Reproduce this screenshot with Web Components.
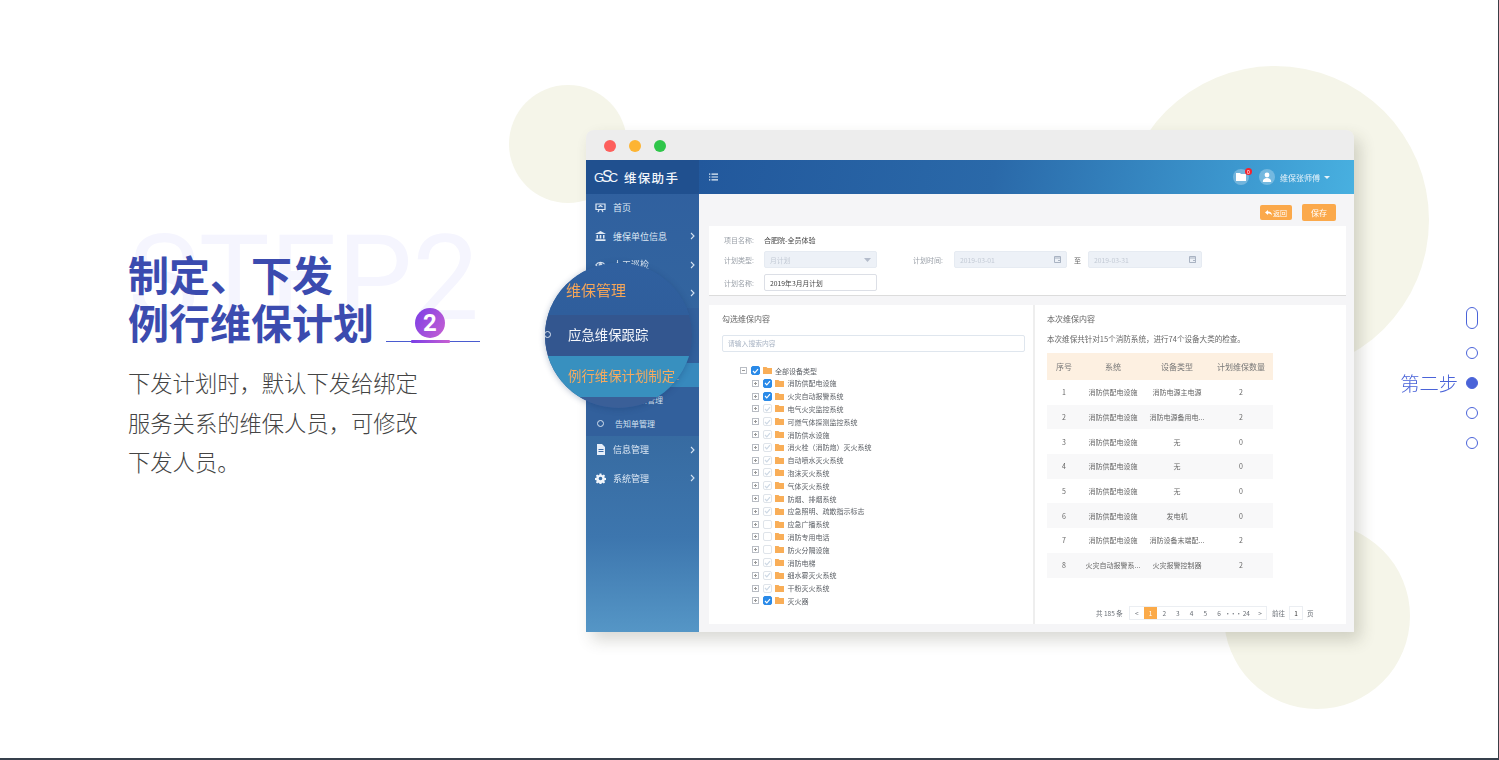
<!DOCTYPE html>
<html lang="zh">
<head>
<meta charset="utf-8">
<title>第二步</title>
<style>
  html, body { margin: 0; padding: 0; background: #fff; overflow: hidden; }
  body { font-family: "Noto Sans CJK SC", "Liberation Sans", sans-serif; }
</style>
</head>
<body>
<step-page></step-page>

<script>
const CJK = `"Noto Sans CJK SC", "Liberation Sans", sans-serif`;

// little helper, every element below is: template + open shadow root
function define(name, html, render) {
  const template = document.createElement("template");
  template.innerHTML = html;
  customElements.define(name, class extends HTMLElement {
    constructor() {
      super();
      this.attachShadow({ mode: "open" });
      this.shadowRoot.appendChild(template.content.cloneNode(true));
    }
    connectedCallback() {
      if (render && !this._done) { this._done = true; render.call(this, this.shadowRoot); }
    }
  });
}

const icons = {
  home: `<svg width="11" height="10" viewBox="0 0 11 10" fill="none" stroke="#dfe9f5" stroke-width="1.2"><path d="M1 1h9v5.5H1z"/><path d="M3 9l1.2-2.5M8 9L6.8 6.5M3.5 4l2-1.4L7.5 4"/></svg>`,
  bank: `<svg width="11" height="10" viewBox="0 0 11 10" fill="#dfe9f5"><path d="M5.5 0L11 3H0z"/><path d="M1.5 4h1.5v3.5H1.5zM4.7 4h1.6v3.5H4.7zM8 4h1.5v3.5H8zM.5 8.2h10V10H.5z"/></svg>`,
  eye: `<svg width="11" height="10" viewBox="0 0 11 10" fill="none" stroke="#dfe9f5" stroke-width="1.2"><path d="M.8 5C3 1.6 8 1.6 10.2 5 8 8.4 3 8.4.8 5z"/><circle cx="5.5" cy="5" r="1.3" fill="#dfe9f5"/></svg>`,
  wrench: `<svg width="11" height="10" viewBox="0 0 11 10" fill="#dfe9f5"><path d="M1 1h9v2H1zM1 4.5h9v2H1zM1 8h9v2H1z"/></svg>`,
  doc: `<svg width="11" height="11" viewBox="0 0 11 11"><path fill="#e6eef8" d="M2 0h5l3 3v8H2z"/><path stroke="#3a6ca8" d="M3.5 5.5h5M3.5 7.5h5"/></svg>`,
  gear: `<svg width="11" height="11" viewBox="0 0 24 24" fill="#f0f5fb"><path fill-rule="evenodd" d="M10 1h4l.6 3.1 2 .8 2.6-1.8 2.8 2.8-1.8 2.6.8 2 3 .5v4l-3 .6-.8 2 1.8 2.6-2.8 2.8-2.6-1.8-2 .8-.6 3h-4l-.6-3-2-.8-2.6 1.8-2.8-2.8 1.8-2.6-.8-2-3-.6v-4l3-.5.8-2L2 5.9l2.8-2.8 2.6 1.8 2-.8zM12 8a4 4 0 1 0 0 8 4 4 0 0 0 0-8z"/></svg>`,
  chevron: `<svg width="5" height="8" viewBox="0 0 5 8" fill="none" stroke="#d5e3f2" stroke-width="1.1"><path d="M1 1l3 3-3 3"/></svg>`
};

define("side-item", `
  <style>
    :host { display: flex; align-items: center; height: 28.5px; padding-left: 9px; padding-bottom: 1px; box-sizing: border-box; color: #dde8f4; font-size: 9px; position: relative; }
    #icon { width: 11px; height: 11px; display: flex; align-items: center; margin-right: 7px; }
    #arrow { margin-left: auto; margin-right: 4px; display: flex; }
  </style>
  <span id="icon"></span><slot></slot><span id="arrow"></span>
`, function (root) {
  root.querySelector("#icon").innerHTML = icons[this.getAttribute("icon")] || "";
  if (this.hasAttribute("more")) root.querySelector("#arrow").innerHTML = icons.chevron;
});

define("side-sub", `
  <style>
    :host { display: flex; align-items: center; height: 24px; padding-left: 11px; box-sizing: border-box; color: #d5e2f0; font-size: 8px; }
    :host([active]) { background: #3789bd; color: #f8b469; }
    i { width: 5px; height: 5px; border: 1px solid #d5e2f0; border-radius: 50%; margin-right: 11px; }
  </style>
  <i></i><slot></slot>
`);

define("app-sidebar", `
  <style>
    :host { display: block; width: 113px; flex: none; background: linear-gradient(180deg, #2f5f9f 0%, #36699f 55%, #3d76ae 80%, #5596c6 100%); font-family: ${CJK}; }
    #logo { height: 34px; display: flex; align-items: center; background: #20508f; color: #f2f6fb; padding-left: 8px; box-sizing: border-box; }
    #mark { font: 400 13px "Liberation Sans", sans-serif; letter-spacing: -3px; width: 30px; flex: none; }
    #mark b { font-size: 16px; font-weight: 400; font-style: italic; }
    #name { font-size: 12.5px; font-weight: 500; letter-spacing: 1.3px; }
    #subs { background: #32609c; padding-top: 7px; height: 128px; box-sizing: border-box; }
  </style>
  <div id="logo"><span id="mark">G<b>S</b>C</span><span id="name">维保助手</span></div>
  <side-item icon="home">首页</side-item>
  <side-item icon="bank" more>维保单位信息</side-item>
  <side-item icon="eye" more>人工巡检</side-item>
  <side-item icon="wrench" more>维保管理</side-item>
  <div id="subs">
    <side-sub>应急维保跟踪</side-sub>
    <side-sub>维保计划管理</side-sub>
    <side-sub active>例行维保计划制定</side-sub>
    <side-sub>维保记录管理</side-sub>
    <side-sub>告知单管理</side-sub>
  </div>
  <side-item icon="doc" more>信息管理</side-item>
  <side-item icon="gear" more>系统管理</side-item>
`);

define("app-header", `
  <style>
    :host { display: flex; align-items: center; height: 34px; background: linear-gradient(100deg, #22589c 0%, #2a69a9 45%, #3e9cd2 85%, #48b0e0 100%); color: #e6f2fa; font-family: ${CJK}; padding-left: 10px; box-sizing: border-box; }
    #list { display: flex; }
    #right { margin-left: auto; display: flex; align-items: center; padding-right: 24px; font-size: 8px; }
    .round { width: 16px; height: 16px; border-radius: 50%; background: rgba(255,255,255,.28); display: flex; align-items: center; justify-content: center; position: relative; }
    #dot { position: absolute; right: -3px; top: -1px; width: 7px; height: 7px; border-radius: 50%; background: #f5222d; color: #fff; font-size: 5px; line-height: 7px; text-align: center; }
    #who { margin: 0 4px 0 5px; }
    #caret { width: 0; height: 0; border: 3px solid transparent; border-top: 3.5px solid #e6f2fa; margin-top: 3px; }
  </style>
  <span id="list"><svg width="9" height="8" viewBox="0 0 9 8" fill="#e8f2fa"><path d="M0 .5h1.3v1.2H0zM2.5.5H9v1.2H2.5zM0 3.4h1.3v1.2H0zM2.5 3.4H9v1.2H2.5zM0 6.3h1.3v1.2H0zM2.5 6.3H9v1.2H2.5z"/></svg></span>
  <div id="right">
    <span class="round"><svg width="10" height="8" viewBox="0 0 10 8" fill="#fff"><path d="M0 0h4l1 1h5v7H0z"/></svg><span id="dot">0</span></span>
    <span class="round" style="margin-left:10px"><svg width="10" height="10" viewBox="0 0 10 10" fill="#fff"><circle cx="5" cy="3" r="2.4"/><path d="M.8 10c0-3 2-4 4.2-4s4.200 1 4.200 4z"/></svg></span>
    <span id="who">维保张师傅</span><span id="caret"></span>
  </div>
`);

define("form-field", `
  <style>
    :host { display: flex; align-items: center; box-sizing: border-box; width: 113px; height: 17px; border-radius: 2px; background: #edf1f7; border: 1px solid #e6ebf2; color: #c3cad5; font-size: 6.8px; padding: 0 5px; }
    :host([plain]) { background: #fff; border-color: #dcdfe6; color: #444; }
    #end { margin-left: auto; display: flex; }
  </style>
  <slot></slot><span id="end"></span>
`, function (root) {
  const kind = this.getAttribute("end");
  if (kind === "caret") root.querySelector("#end").innerHTML = `<svg width="7" height="4" viewBox="0 0 7 4" fill="#b4bccb"><path d="M0 0h7L3.500 4z"/></svg>`;
  if (kind === "date") root.querySelector("#end").innerHTML = `<svg width="7" height="7" viewBox="0 0 7 7" fill="none" stroke="#a9b3c2"><path d="M.5.5h6v6h-6zM.5 2h6M4 4.500h2.500V6.500"/></svg>`;
});

define("plan-form", `
  <style>
    :host { display: block; height: 70px; background: #fff; border-bottom: 1px solid #dcdcdc; box-sizing: border-box; padding: 7px 0 0 15px; font-size: 7px; color: #9aa0a8; font-family: ${CJK}; }
    .row { display: flex; align-items: center; }
    .label { width: 40px; flex: none; }
    .mid { width: 41px; margin-left: 36px; flex: none; }
    .to { width: 21px; text-align: center; color: #666; flex: none; }
    .val { color: #444; }
  </style>
  <div class="row" style="height:14px"><span class="label">项目名称:</span><span class="val">合肥院-全员体验</span></div>
  <div class="row" style="margin-top:4px">
    <span class="label">计划类型:</span><form-field end="caret">月计划</form-field>
    <span class="mid">计划时间:</span><form-field end="date">2019-03-01</form-field>
    <span class="to">至</span><form-field end="date" style="width:114px">2019-03-31</form-field>
  </div>
  <div class="row" style="margin-top:6px"><span class="label">计划名称:</span><form-field plain>2019年3月月计划</form-field></div>
`);

define("tree-row", `
  <style>
    :host { display: flex; align-items: center; height: 12.8px; font-size: 7px; color: #5c6066; white-space: nowrap; }
    :host([child]) { margin-left: 12.4px; }
    #exp { width: 7px; height: 7px; border: 1px solid #b9bdc4; box-sizing: border-box; position: relative; flex: none; margin-right: 4px; }
    #exp::before { content: ""; position: absolute; left: 1px; right: 1px; top: 2px; height: 1px; background: #999; }
    :host([child]) #exp::after { content: ""; position: absolute; top: 1px; bottom: 1px; left: 2px; width: 1px; background: #999; }
    #box { width: 9px; height: 9px; border-radius: 2px; box-sizing: border-box; flex: none; margin-right: 3px; border: 1px solid #dfe4ea; background: #fff; display: flex; align-items: center; justify-content: center; }
    :host([state=checked]) #box { background: #2a8ae8; border-color: #2a8ae8; }
    #box svg { display: none; }
    :host([state=checked]) #box svg, :host([state=ghost]) #box svg { display: block; }
    :host([state=ghost]) #box svg path { stroke: #cdd8e4; }
    #folder { flex: none; margin-right: 3px; display: flex; }
  </style>
  <span id="exp"></span>
  <span id="box"><svg width="7" height="6" viewBox="0 0 7 6" fill="none"><path d="M1 3l1.800 1.800L6 1.200" stroke="#fff" stroke-width="1.200"/></svg></span>
  <span id="folder"><svg width="9" height="7" viewBox="0 0 9 7" fill="#f9ae58"><path d="M0 0h3.500l1 1H9v6H0z"/></svg></span>
  <slot></slot>
`);

define("tree-panel", `
  <style>
    :host { display: block; width: 324px; flex: none; background: #fff; box-sizing: border-box; padding: 8px 0 0 13px; font-family: ${CJK}; }
    #title { font-size: 8px; height: 12px; line-height: 12px; color: #666; }
    #search { width: 303px; height: 17px; box-sizing: border-box; margin-top: 10px; border: 1px solid #dfe6ee; border-radius: 2px; font-size: 6.800px; color: #a9b4c4; line-height: 15px; padding-left: 5px; }
    #tree { margin: 12.200px 0 0 18px; }
  </style>
  <div id="title">勾选维保内容</div>
  <div id="search">请输入搜索内容</div>
  <div id="tree"></div>
`, function (root) {
  const rows = [
    ["消防供配电设施", "checked"], ["火灾自动报警系统", "checked"], ["电气火灾监控系统", "ghost"],
    ["可燃气体探测监控系统", "ghost"], ["消防供水设施", "ghost"], ["消火栓（消防炮）灭火系统", "ghost"],
    ["自动喷水灭火系统", "ghost"], ["泡沫灭火系统", "ghost"], ["气体灭火系统", "ghost"],
    ["防烟、排烟系统", "ghost"], ["应急照明、疏散指示标志", "ghost"], ["应急广播系统", "empty"],
    ["消防专用电话", "empty"], ["防火分隔设施", "empty"], ["消防电梯", "ghost"],
    ["细水雾灭火系统", "ghost"], ["干粉灭火系统", "ghost"], ["灭火器", "checked"]
  ];
  const tree = root.querySelector("#tree");
  const top = document.createElement("tree-row");
  top.setAttribute("state", "checked");
  top.textContent = "全部设备类型";
  tree.appendChild(top);
  rows.forEach(([text, state]) => {
    const row = document.createElement("tree-row");
    row.setAttribute("child", "");
    row.setAttribute("state", state);
    row.textContent = text;
    tree.appendChild(row);
  });
});

define("plan-pager", `
  <style>
    :host { display: flex; align-items: center; height: 14px; margin-top: 28.400px; padding-left: 49px; font-size: 6.500px; color: #6a6f76; }
    #total { width: 33px; flex: none; }
    #pages { display: flex; height: 14px; border: 1px solid #ebeef2; box-sizing: border-box; width: 138px; flex: none; }
    #pages span { width: 13.700px; flex: none; display: flex; align-items: center; justify-content: center; }
    #pages .on { background: #fbaa49; color: #fff; }
    #pages .more { letter-spacing: -1px; }
    #go { margin-left: 5px; }
    #num { width: 14px; height: 14px; border: 1px solid #ebeef2; box-sizing: border-box; margin: 0 4px 0 4px; display: flex; align-items: center; justify-content: center; color: #333; }
  </style>
  <span id="total">共 185 条</span>
  <div id="pages"><span>&lt;</span><span class="on">1</span><span>2</span><span>3</span><span>4</span><span>5</span><span>6</span><span class="more">···</span><span>24</span><span>&gt;</span></div>
  <span id="go">前往</span><span id="num">1</span><span>页</span>
`);

define("plan-table", `
  <style>
    :host { display: block; flex: 1; background: #fff; border-left: 2px solid #eeeeee; box-sizing: border-box; padding: 8px 0 0 12px; font-family: ${CJK}; }
    #title { font-size: 8px; height: 12px; line-height: 12px; color: #666; }
    #desc { font-size: 7.550px; height: 12px; line-height: 12px; margin-top: 8px; color: #666; white-space: nowrap; }
    #table { width: 226px; margin-top: 8px; }
    .row { display: grid; grid-template-columns: 34px 64px 64px 64px; height: 24.700px; align-items: center; text-align: center; font-size: 7px; color: #666; white-space: nowrap; }
    .row:nth-child(odd) { background: #f8f8f9; }
    .row.head { height: 27px; background: #fdf0e1; font-size: 8px; color: #777; }
  </style>
  <div id="title">本次维保内容</div>
  <div id="desc">本次维保共针对15个消防系统，进行74个设备大类的检查。</div>
  <div id="table"></div>
  <plan-pager></plan-pager>
`, function (root) {
  const data = [
    ["序号", "系统", "设备类型", "计划维保数量"],
    [1, "消防供配电设施", "消防电源主电源", 2],
    [2, "消防供配电设施", "消防电源备用电...", 2],
    [3, "消防供配电设施", "无", 0],
    [4, "消防供配电设施", "无", 0],
    [5, "消防供配电设施", "无", 0],
    [6, "消防供配电设施", "发电机", 0],
    [7, "消防供配电设施", "消防设备末端配...", 2],
    [8, "火灾自动报警系...", "火灾报警控制器", 2]
  ];
  const table = root.querySelector("#table");
  data.forEach((cells, i) => {
    const row = document.createElement("div");
    row.className = i === 0 ? "row head" : "row";
    cells.forEach((c) => {
      const cell = document.createElement("span");
      cell.textContent = c;
      row.appendChild(cell);
    });
    table.appendChild(row);
  });
});

define("app-content", `
  <style>
    :host { display: block; flex: 1; background: #f5f5f7; box-sizing: border-box; padding: 0 8px 0 10px; font-family: ${CJK}; }
    #bar { height: 32px; display: flex; align-items: center; justify-content: flex-end; padding-right: 10px; box-sizing: border-box; padding-top: 5px; color: #fff; }
    .btn { background: #fba94b; border-radius: 2px; display: flex; align-items: center; justify-content: center; font-size: 7px; }
    #panel { display: flex; height: 319px; margin-top: 9px; }
  </style>
  <div id="bar">
    <span class="btn" style="width:32px;height:15px"><svg width="7" height="6" viewBox="0 0 7 6" fill="#fff" style="margin-right:1px"><path d="M3 0v1.500c2.500 0 4 1.500 4 4C6 4 5 3.500 3 3.500V5L0 2.500z"/></svg>返回</span>
    <span class="btn" style="width:34px;height:17px;margin-left:10px;font-size:8px">保存</span>
  </div>
  <plan-form></plan-form>
  <div id="panel"><tree-panel></tree-panel><plan-table></plan-table></div>
`);

define("browser-window", `
  <style>
    :host { display: block; width: 768px; height: 502px; flex: none; position: relative; border-radius: 8px 8px 0 0; box-shadow: 6px 8px 16px rgba(60,60,40,.2); filter: blur(.45px); }
    #bar { height: 30px; background: #ededed; border-radius: 8px 8px 0 0; display: flex; align-items: center; gap: 13px; padding: 2px 0 0 18px; box-sizing: border-box; }
    #bar i { width: 12px; height: 12px; border-radius: 50%; }
    #body { display: flex; height: 472px; }
    #main { flex: 1; display: flex; flex-direction: column; }
  </style>
  <div id="bar"><i style="background:#fd5f5c"></i><i style="background:#fdb432"></i><i style="background:#2fc64a"></i></div>
  <div id="body">
    <app-sidebar></app-sidebar>
    <div id="main"><app-header></app-header><app-content></app-content></div>
  </div>
`);

// the round lens that lies over the sidebar
define("menu-lens", `
  <style>
    :host { position: absolute; left: 545px; top: 263px; width: 147px; height: 145px; border-radius: 50%; overflow: hidden; background: #2f5f9f; box-shadow: 0 1px 6px rgba(20,50,100,.3); font-family: ${CJK}; display: flex; flex-direction: column; z-index: 3; filter: blur(.25px); }
    #head { height: 52px; box-sizing: border-box; padding: 17px 0 0 21px; color: #f6a658; font-size: 15px; line-height: 20px; background: linear-gradient(180deg, #30609f, #2f5e9c); }
    .line { height: 41px; box-sizing: border-box; display: flex; align-items: center; padding: 0 0 3px 23px; font-size: 13.400px; white-space: nowrap; position: relative; }
    #a { background: #33568f; color: #f4f6fa; }
    #a i { position: absolute; left: -1px; width: 5px; height: 5px; border: 1px solid #dde6f2; border-radius: 50%; }
    #b { background: #3890bf; color: #f6aa5f; }
    #tail { flex: 1; background: #3a5f98; }
  </style>
  <div id="head">维保管理</div>
  <div class="line" id="a"><i></i>应急维保跟踪</div>
  <div class="line" id="b">例行维保计划制定</div>
  <div id="tail"></div>
`);

define("step-intro", `
  <style>
    :host { display: block; width: 586px; flex: none; box-sizing: border-box; padding: 249px 0 0 128px; position: relative; font-family: ${CJK}; }
    #bg { position: absolute; left: 128px; top: 209px; font: 400 119px/140px Roboto, "Liberation Sans", sans-serif; color: #f5f5fe; white-space: nowrap; }
    h1 { position: relative; margin: 0; font-size: 41px; line-height: 48px; font-weight: 700; color: #3b4baf; white-space: nowrap; }
    #second { display: flex; }
    #deco { width: 94px; margin-left: 12px; height: 48px; display: flex; flex-direction: column; justify-content: flex-end; padding-bottom: 3px; box-sizing: border-box; }
    #num { width: 30px; height: 30px; margin-left: 29px; border-radius: 50%; background: linear-gradient(120deg, #7a3ee6, #c860d2); color: #fff; font: 700 24px/30px Roboto, "Liberation Sans", sans-serif; text-align: center; }
    #rule { height: 1px; background: #4a5bd0; margin-top: 3px; position: relative; }
    #rule::after { content: ""; position: absolute; left: 25px; width: 39px; top: -1px; height: 3px; border-radius: 1px; background: linear-gradient(90deg, #7a3ee6, #c860d2); }
    p { position: relative; margin: 18px 0 0; width: 300px; font-size: 22.300px; font-weight: 300; line-height: 39.500px; color: #444; }
  </style>
  <div id="bg">STEP2</div>
  <h1>制定、下发<div id="second">例行维保计划<div id="deco"><div id="num">2</div><div id="rule"></div></div></div></h1>
  <p>下发计划时，默认下发给绑定<br>服务关系的维保人员，可修改<br>下发人员。</p>
`);

define("step-rail", `
  <style>
    :host { display: flex; flex-direction: column; flex: 1; align-items: flex-end; padding: 303px 20px 0 0; box-sizing: border-box; font-family: ${CJK}; color: #4a63d8; }
    .row { height: 30px; display: flex; align-items: center; gap: 8px; font-size: 19.300px; font-weight: 300; white-space: nowrap; }
    .pill { width: 12px; height: 22px; border: 1.500px solid #4a63d8; border-radius: 6px; box-sizing: border-box; }
    .dot { width: 12px; height: 12px; border: 1.500px solid #4a63d8; border-radius: 50%; box-sizing: border-box; }
    .dot.on { background: #4a63d8; }
  </style>
  <div class="row" style="margin-bottom:5px"><span class="pill"></span></div>
  <div class="row"><span class="dot"></span></div>
  <div class="row">第二步<span class="dot on"></span></div>
  <div class="row"><span class="dot"></span></div>
  <div class="row"><span class="dot"></span></div>
`);

define("step-page", `
  <style>
    :host { display: flex; position: relative; width: 1499px; height: 760px; box-sizing: border-box; overflow: hidden; background: #fff; border-bottom: 2px solid #36404c; border-right: 1px solid #3a3f46; }
    .blob { position: absolute; border-radius: 50%; background: #f5f5e9; }
    #win { flex: none; padding-top: 130px; position: relative; }
    step-intro, step-rail { position: relative; }
  </style>
  <div class="blob" style="left:509px;top:85px;width:118px;height:118px"></div>
  <div class="blob" style="left:1121px;top:66px;width:308px;height:308px"></div>
  <div class="blob" style="left:1224px;top:523px;width:186px;height:186px"></div>
  <step-intro></step-intro>
  <div id="win"><browser-window></browser-window></div>
  <step-rail></step-rail>
  <menu-lens></menu-lens>
`);
</script>
</body>
</html>
